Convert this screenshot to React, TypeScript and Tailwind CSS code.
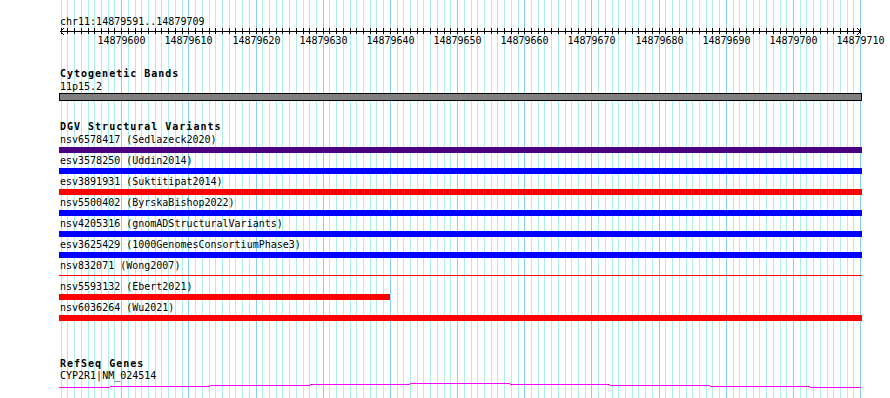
import React from "react";

const START = 14879591;
const END = 14879710;

// pixel column for a base position, same scale as the grid and ruler
const px = (pos: number) => Math.round(60.7 + (pos - START) * 6.7185);

const positions = Array.from({ length: END - START + 1 }, (_, i) => START + i);

const variants = [
  { label: "nsv6578417 (Sedlazeck2020)", bar: "bg-[#4b0082] w-[803px]" },
  { label: "esv3578250 (Uddin2014)", bar: "bg-[#0000ff] w-[803px]" },
  { label: "esv3891931 (Suktitipat2014)", bar: "bg-[#ff0000] w-[803px]" },
  { label: "nsv5500402 (ByrskaBishop2022)", bar: "bg-[#0000ff] w-[803px]" },
  { label: "nsv4205316 (gnomADStructuralVariants)", bar: "bg-[#0000ff] w-[803px]" },
  { label: "esv3625429 (1000GenomesConsortiumPhase3)", bar: "bg-[#0000ff] w-[803px]" },
  { label: "nsv832071 (Wong2007)", bar: "thin" },
  { label: "nsv5593132 (Ebert2021)", bar: "bg-[#ff0000] w-[331px]" },
  { label: "nsv6036264 (Wu2021)", bar: "bg-[#ff0000] w-[803px]" },
];

// intron line of the gene model, drawn as a shallow hat
const intron: [number, number, number][] = [
  [59, 110, 387],
  [110, 210, 386],
  [210, 310, 385],
  [310, 410, 384],
  [410, 510, 383],
  [510, 610, 384],
  [610, 710, 385],
  [710, 810, 386],
  [810, 861, 387],
];

const Grid = () => (
  <svg className="absolute inset-0" width={890} height={398}>
    {positions.map((p) =>
      p % 10 === 0 ? null : (
        <line key={p} x1={px(p) + 0.5} x2={px(p) + 0.5} y1={0} y2={398} stroke="#afeeee" strokeWidth={1} />
      )
    )}
    {positions
      .filter((p) => p % 10 === 0)
      .map((p) => (
        <line key={p} x1={px(p) + 0.5} x2={px(p) + 0.5} y1={0} y2={398} stroke="#87cefa" strokeWidth={1} />
      ))}
  </svg>
);

const Ruler = () => (
  <svg className="block" width={890} height={20}>
    <line x1={60} x2={861} y1={4.5} y2={4.5} stroke="#000" strokeWidth={1} />
    {positions.map((p) => (
      <line key={p} x1={px(p) + 0.5} x2={px(p) + 0.5} y1={1} y2={7} stroke="#000" strokeWidth={1} />
    ))}
    <polyline points="64,1 60.5,4.5 64,8" fill="none" stroke="#000" strokeWidth={1} />
    <polyline points="857,1 860.5,4.5 857,8" fill="none" stroke="#000" strokeWidth={1} />
    {positions
      .filter((p) => p % 10 === 0)
      .map((p) => (
        <text
          key={p}
          x={px(p) + 0.5}
          y={17.3}
          textAnchor="middle"
          fontSize={10}
          fontFamily="'DejaVu Sans Mono', monospace"
          fill="#000"
        >
          {p}
        </text>
      ))}
  </svg>
);

const Title = ({ children, className }: { children: React.ReactNode; className: string }) => (
  <div className={`ml-[60px] h-[10px] font-bold tracking-[1px] whitespace-pre ${className}`}>{children}</div>
);

const Label = ({ children, className }: { children: React.ReactNode; className: string }) => (
  <div className={`ml-[60px] h-[10px] whitespace-pre ${className}`}>{children}</div>
);

export default function App() {
  return (
    <div className="relative w-[890px] h-[398px] overflow-hidden bg-white text-black font-['DejaVu_Sans_Mono',monospace] text-[10px] leading-[10px]">
      <Grid />

      <div className="relative flex flex-col">
        {/* ruler */}
        <Label className="mt-[17px]">chr11:14879591..14879709</Label>
        <Ruler />

        {/* cytogenetic bands */}
        <Title className="mt-[22px]">Cytogenetic Bands</Title>
        <Label className="mt-[3px]">11p15.2</Label>
        <div className="ml-[59px] mt-[1px] w-[803px] h-[8px] bg-[#808080] border border-black" />

        {/* DGV */}
        <Title className="mt-[21px]">DGV Structural Variants</Title>
        <div className="mt-[3px] flex flex-col">
          {variants.map((v) => (
            <div key={v.label} className="flex flex-col h-[21px]">
              <Label className="">{v.label}</Label>
              {v.bar === "thin" ? (
                <div className="ml-[59px] mt-[2px] h-[6px] w-[803px] pt-[2px]">
                  <div className="h-[1px] w-full bg-[#ff0000]" />
                </div>
              ) : (
                <div className={`ml-[59px] mt-[2px] h-[6px] ${v.bar}`} />
              )}
            </div>
          ))}
        </div>

        {/* RefSeq */}
        <Title className="mt-[35px]">RefSeq Genes</Title>
        <Label className="mt-[2px]">CYP2R1|NM_024514</Label>
        <svg className="block" width={890} height={10}>
          {intron.map(([x1, x2, y]) => (
            <line key={x1} x1={x1} x2={x2} y1={y - 381 + 0.5} y2={y - 381 + 0.5} stroke="#ff00ff" strokeWidth={1} />
          ))}
        </svg>
      </div>
    </div>
  );
}
